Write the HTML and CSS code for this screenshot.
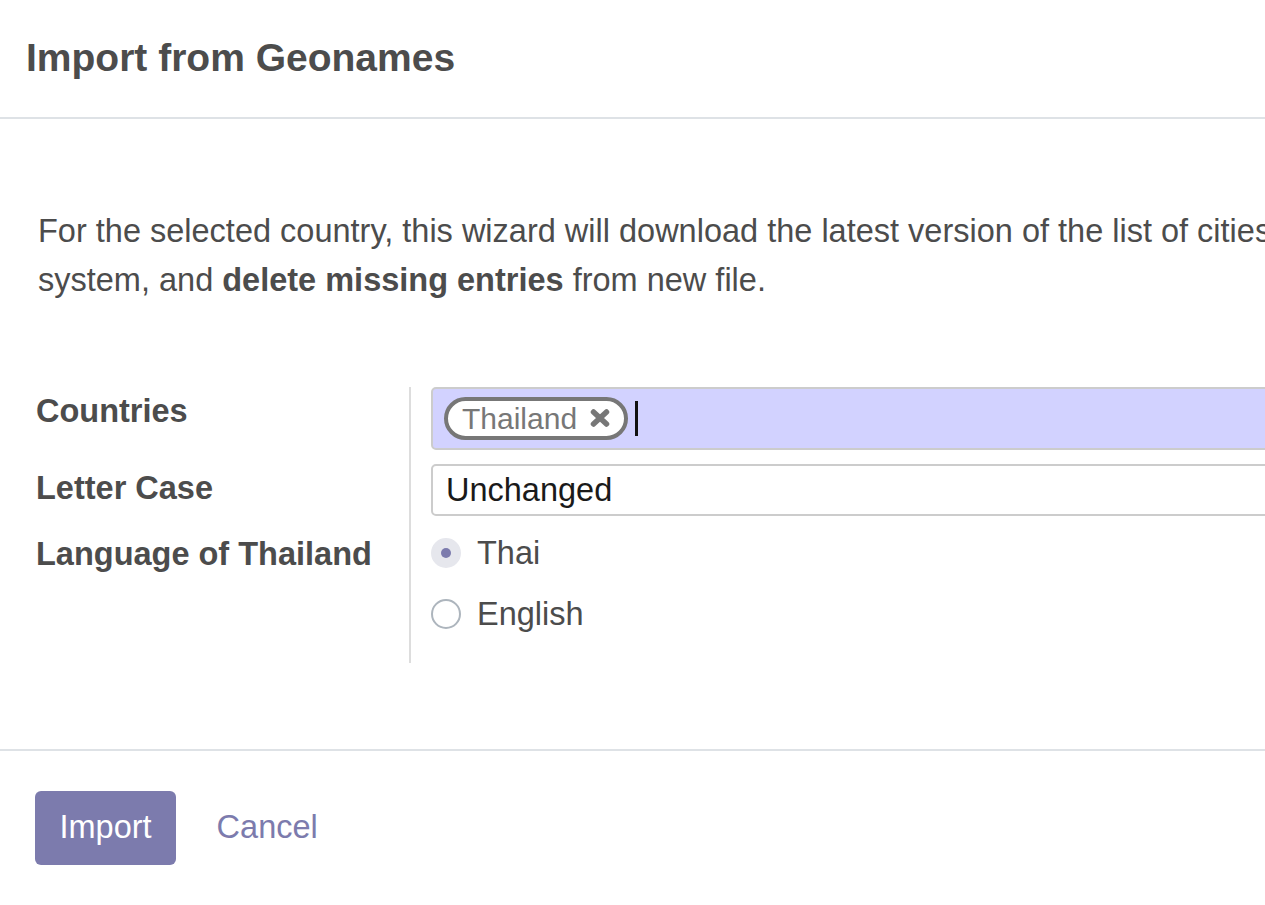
FILE: index.html
```html
<!DOCTYPE html>
<html lang="en">
<head>
<meta charset="utf-8">
<title>Import from Geonames</title>
<link rel="stylesheet" href="styles.css">
</head>
<body>
<div class="dialog">
  <header class="dlg-header">
    <h4 class="dlg-title">Import from Geonames</h4>
  </header>
  <main class="dlg-body">
    <p class="intro">For the selected country, this wizard will download the latest version of the list of cities from <a class="plain-link" href="#">Geonames.org</a>, create new location entries if not found already in the<br>system, and <b>delete missing entries</b> from new file.</p>
    <div class="form-grid">
      <div class="lbl">Countries</div>
      <div class="fld">
        <div class="many2many">
          <span class="tag">Thailand
            <svg class="tag-x" width="20" height="18" viewBox="0 0 20 18" aria-hidden="true"><path d="M3.5 3 L16.5 15 M16.5 3 L3.5 15" stroke="#777" stroke-width="5.5" stroke-linecap="round" fill="none"/></svg>
          </span>
          <span class="caret"></span>
        </div>
      </div>
      <div class="lbl">Letter Case</div>
      <div class="fld">
        <div class="select">Unchanged</div>
      </div>
      <div class="lbl">Language of Thailand</div>
      <div class="fld fld-last">
        <div class="radio-row"><span class="radio checked"></span><span class="radio-label">Thai</span></div>
        <div class="radio-row"><span class="radio"></span><span class="radio-label">English</span></div>
      </div>
    </div>
  </main>
  <footer class="dlg-footer">
    <button class="btn btn-primary" type="button">Import</button>
    <button class="btn btn-link" type="button">Cancel</button>
  </footer>
</div>
</body>
</html>
```
FILE: styles.css
```css
html, body {
  margin: 0;
  padding: 0;
  overflow: hidden;
  background: #ffffff;
}
body {
  font-family: "Liberation Sans", Arial, sans-serif;
  color: #4c4c4c;
  font-size: 32.5px;
  line-height: 1.5;
}
.dialog {
  width: 1800px;
}
.dlg-header {
  padding: 35px 26px 35px;
  border-bottom: 2px solid #dee2e6;
}
.dlg-title {
  margin: 0;
  font-size: 39px;
  line-height: 46.8px;
  font-weight: 700;
  color: #4c4c4c;
}
.dlg-body {
  padding: 88px 35px 86px;
}
.intro {
  margin: 0 0 0 3px;
  white-space: nowrap;
  line-height: 48.75px;
}
.plain-link {
  color: inherit;
  text-decoration: none;
}
.intro b {
  font-weight: 700;
}
.form-grid {
  margin-top: 82.5px;
  display: grid;
  grid-template-columns: 374px 1fr;
}
.lbl {
  font-weight: 700;
  line-height: 48.75px;
  white-space: nowrap;
  padding-left: 1px;
}
.fld {
  border-left: 2px solid #dddddd;
  padding-left: 20px;
  padding-bottom: 14px;
}
.fld-last {
  padding-bottom: 26px;
}
.many2many {
  box-sizing: border-box;
  height: 63px;
  background: #d2d2ff;
  border: 2px solid #cccccc;
  border-radius: 5px;
  display: flex;
  align-items: center;
  padding: 0 11px;
}
.tag {
  display: inline-flex;
  align-items: center;
  gap: 13px;
  box-sizing: border-box;
  height: 43px;
  padding: 0 14px 0 14px;
  border: 4px solid #777777;
  border-radius: 22px;
  background: #ffffff;
  color: #777777;
  font-size: 30px;
  line-height: 35px;
}
.tag-x {
  display: block;
}
.caret {
  width: 3px;
  height: 35px;
  background: #111111;
  margin-left: 7px;
}
.select {
  box-sizing: border-box;
  height: 52px;
  border: 2px solid #cccccc;
  border-radius: 5px;
  padding: 0 13px;
  line-height: 48px;
  color: #1a1a1a;
}
.radio-row {
  display: flex;
  align-items: center;
  height: 46px;
  line-height: 46px;
}
.radio-row + .radio-row {
  margin-top: 15px;
}
.radio {
  box-sizing: border-box;
  width: 30px;
  height: 30px;
  border-radius: 50%;
  border: 2px solid #adb5bd;
  background: #ffffff;
  display: flex;
  align-items: center;
  justify-content: center;
  margin-right: 16px;
}
.radio.checked {
  border-color: #e6e7ed;
  background: #e6e7ed;
}
.radio.checked::after {
  content: "";
  width: 10px;
  height: 10px;
  border-radius: 50%;
  background: #7c7bad;
}
.dlg-footer {
  border-top: 2px solid #dee2e6;
  padding: 40px 35px;
  display: flex;
  align-items: center;
  gap: 16px;
}
.btn {
  font-family: inherit;
  font-size: 32.5px;
  line-height: 48.75px;
  padding: 12.6px 24.5px;
  border: none;
  border-radius: 6px;
  margin: 0;
  cursor: pointer;
}
.btn-primary {
  background: #7c7bad;
  color: #ffffff;
}
.btn-link {
  background: transparent;
  color: #7c7bad;
}
```
